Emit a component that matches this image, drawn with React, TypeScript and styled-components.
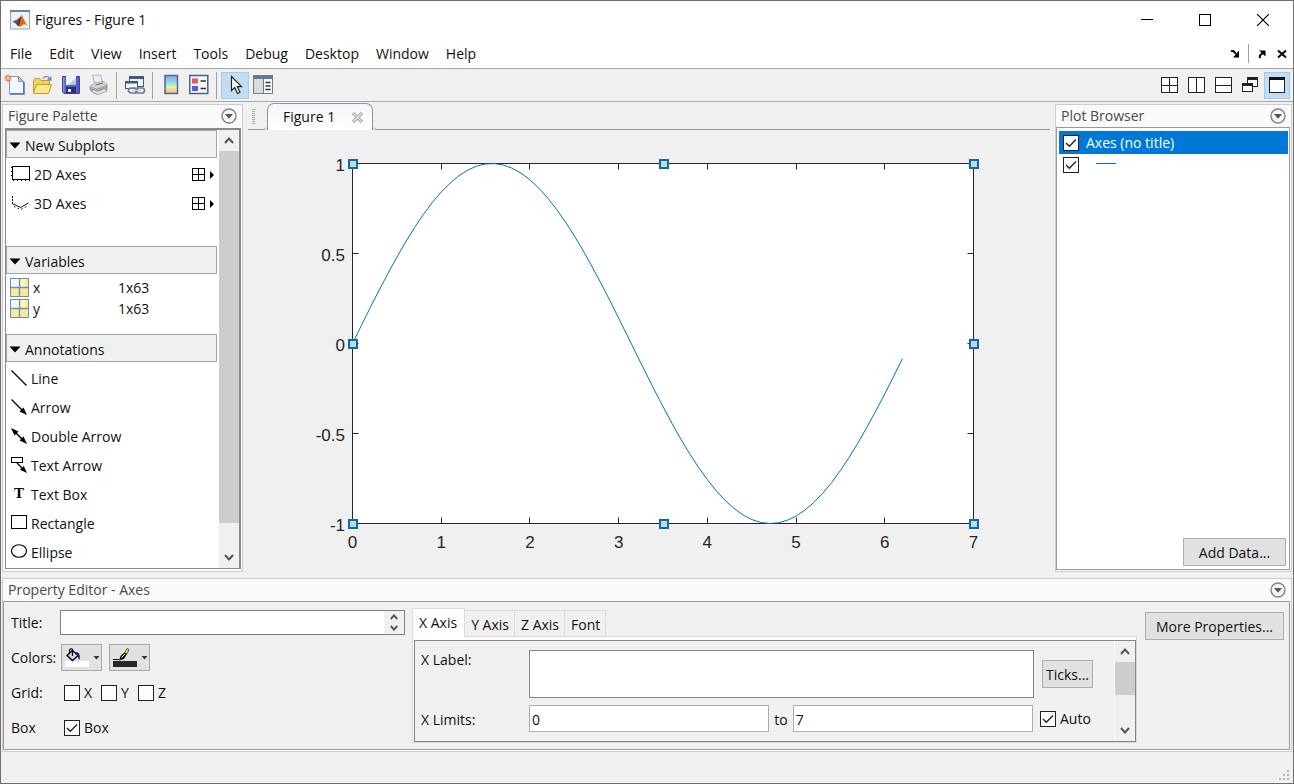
import React from "react";
import styled, { createGlobalStyle, css } from "styled-components";

const GlobalStyle = createGlobalStyle`
  *, *::before, *::after { box-sizing: border-box; }
  body { margin: 0; background: #f0f0f0; }
  body, button, input, textarea {
    font-family: "Open Sans", "Noto Sans", sans-serif;
    font-size: 14px;
    line-height: 20px;
    color: #111;
  }
  button { padding: 0; border: 0; background: none; }
  svg { display: block; flex: none; }
`;

/* ---------- window frame ---------- */

const Window = styled.div`
  min-height: 100vh;
  display: flex;
  flex-direction: column;
  border: 1px solid #6e6e6e;
  background: #f0f0f0;
`;

const TitleBar = styled.header`
  display: flex;
  align-items: center;
  height: 38px;
  padding: 0 1px 0 9px;
  gap: 5px;
  background: #fff;
`;

const WindowTitle = styled.h1`
  flex: 1;
  margin: 0;
  font-size: 14px;
  font-weight: 400;
`;

const CaptionButtons = styled.div`
  display: flex;
  align-self: stretch;
`;

const CaptionButton = styled.button`
  width: 58px;
  display: grid;
  place-items: center;
`;

const MenuBar = styled.nav`
  display: flex;
  align-items: center;
  justify-content: space-between;
  height: 29px;
  padding: 0 6px 0 9px;
  background: #fff;
`;

const MenuList = styled.div`
  display: flex;
  gap: 17px;
`;

const DockControls = styled.div`
  display: flex;
  align-items: center;
  gap: 8px;
`;

const DockPair = styled.div`
  display: flex;
  gap: 10px;
`;

const DockDivider = styled.span`
  width: 1px;
  height: 19px;
  background: #a0a0a0;
`;

const Toolbar = styled.div`
  display: flex;
  justify-content: space-between;
  align-items: center;
  height: 34px;
  padding-right: 3px;
  border-top: 1px solid #a6a6a6;
  border-bottom: 1px solid #a6a6a6;
`;

const ToolGroup = styled.div<{ $gap?: number }>`
  display: flex;
  align-items: center;
  gap: ${(p) => p.$gap ?? 0}px;
`;

const ToolButton = styled.button<{ $active?: boolean; $narrow?: boolean }>`
  width: ${(p) => (p.$narrow ? 26 : 28)}px;
  height: 27px;
  display: grid;
  place-items: center;
  ${(p) =>
    p.$active &&
    css`
      background: #c3dcf2;
      border: 1px solid #9fcbef;
    `}
`;

const ToolDivider = styled.span`
  width: 1px;
  height: 27px;
  margin: 0 4px 0 3px;
  background: #a0a0a0;
`;

const Workspace = styled.main`
  flex: 1;
  display: grid;
  grid-template-columns: 241px minmax(0, 1fr) 237px;
  gap: 5px;
  padding: 1px 1px 6px;
`;

const StatusBar = styled.footer`
  display: flex;
  justify-content: flex-end;
  align-items: flex-end;
  height: 31px;
  padding: 2px;
`;

/* ---------- docked panels ---------- */

const Panel = styled.section<{ $docked?: boolean }>`
  display: flex;
  flex-direction: column;
  margin: ${(p) => (p.$docked ? "1px 0 0" : "0 1px")};
  border: 1px solid #cdcdcd;
  background: #fafafa;
`;

const PanelHeader = styled.div`
  display: flex;
  align-items: center;
  justify-content: space-between;
  height: 22px;
  padding: 0 5px;
`;

const PanelTitle = styled.h2`
  margin: 0;
  font-size: 14px;
  font-weight: 400;
  color: #4a4a4a;
`;

const PanelBody = styled.div<{ $gray?: boolean }>`
  flex: 1;
  display: flex;
  margin: 0 1px 1px 0;
  border: 1px solid #9a9a9a;
  background: ${(p) => (p.$gray ? "#f0f0f0" : "#fff")};
`;

/* ---------- figure palette ---------- */

const PaletteBody = styled(PanelBody)`
  margin: 1px 1px 2px 2px;
  border-width: 2px 2px 1px 1px;
  border-color: #8a8a8a;
`;

const PaletteList = styled.div`
  flex: 1;
  padding-right: 1px;
`;

const SectionHeader = styled.button`
  display: flex;
  align-items: center;
  gap: 4px;
  width: 100%;
  height: 28px;
  padding: 3px 0 0 2px;
  border: 1px solid #a5a5a5;
  background: #f0f0f0;
`;

const SectionItems = styled.div<{ $top: number; $bottom?: number }>`
  padding: ${(p) => p.$top}px 3px ${(p) => p.$bottom ?? 0}px 5px;
`;

const PaletteRow = styled.div`
  display: flex;
  align-items: center;
  justify-content: space-between;
  height: 29px;
`;

const PaletteItem = styled.button`
  display: flex;
  align-items: center;
  gap: 4px;
  > svg { margin-bottom: 2px; }
`;

const GridPicker = styled.button`
  display: flex;
  align-items: center;
  gap: 5px;
`;

const VariableTable = styled.table`
  border-collapse: collapse;
  margin: 3px 0 15px 4px;
  td { height: 21px; padding: 1px 0 0; }
  td:first-child { width: 23px; padding: 0; }
  td:nth-child(2) { width: 85px; }
`;

const ScrollBar = styled.div<{ $line: string }>`
  width: 21px;
  display: flex;
  flex-direction: column;
  border-left: 1px solid ${(p) => p.$line};
  background: #f0f0f0;
`;

const ScrollArrow = styled.button`
  height: 21px;
  display: grid;
  place-items: center;
`;

const ScrollTrack = styled.div`
  flex: 1;
`;

const ScrollThumb = styled.div<{ $length: string }>`
  height: ${(p) => p.$length};
  background: #cdcdcd;
`;

/* ---------- figure document ---------- */

const DocumentArea = styled.div`
  display: flex;
  flex-direction: column;
  min-width: 0;
`;

const TabStrip = styled.div`
  display: flex;
  height: 27px;
`;

const TabGrip = styled.div`
  width: 19px;
  padding: 6px 0 0 3px;
  border-bottom: 1px solid #959595;
  border-bottom-right-radius: 4px;
`;

const FigureTab = styled.div`
  display: flex;
  align-items: center;
  gap: 16px;
  padding: 0 8px 0 15px;
  border: 1px solid #959595;
  border-bottom: 0;
  border-radius: 7px 7px 0 0;
  background: linear-gradient(#f4f4fa, #ffffff);
`;

const TabStripFill = styled.div`
  flex: 1;
  border-bottom: 1px solid #959595;
  border-bottom-left-radius: 4px;
`;

const ChartCanvas = styled.svg`
  width: 100%;
  height: auto;
`;

/* ---------- plot browser ---------- */

const BrowserBody = styled(PanelBody)`
  flex-direction: column;
  justify-content: space-between;
`;

const SeriesList = styled.div`
  padding: 3px 1px 0 2px;
`;

const SeriesRow = styled.label<{ $selected?: boolean }>`
  display: flex;
  align-items: center;
  height: ${(p) => (p.$selected ? 23 : 21)}px;
  padding-left: 4px;
  gap: ${(p) => (p.$selected ? 7 : 17)}px;
  color: #fff;
  background: ${(p) => (p.$selected ? "#0078d7" : "none")};
`;

const BrowserFooter = styled.div`
  display: flex;
  justify-content: flex-end;
  padding: 3px;
`;

const PushButton = styled.button<{ $width: number }>`
  width: ${(p) => p.$width}px;
  height: 28px;
  padding-top: 2px;
  border: 1px solid #adadad;
  background: #e1e1e1;
  white-space: nowrap;
`;

/* ---------- property editor ---------- */

const EditorBody = styled(PanelBody)`
  align-items: flex-start;
  padding: 3px 5px 4px 7px;
`;

const AxesForm = styled.div`
  width: 394px;
`;

const FormRow = styled.div`
  display: grid;
  grid-template-columns: 49px minmax(0, 1fr);
  align-items: center;
  height: 35px;
`;

const CheckGroup = styled.div`
  display: flex;
  gap: 9px;
  padding-left: 4px;
`;

const TitleField = styled.div`
  display: flex;
  height: 25px;
  border: 1px solid #7f7f85;
  background: #fff;
`;

const PlainInput = styled.input`
  flex: 1;
  min-width: 0;
  border: 0;
  padding: 0 2px;
  background: transparent;
`;

const Spinner = styled.div`
  width: 20px;
  display: flex;
  flex-direction: column;
  background: #f0f0f0;
`;

const SpinButton = styled.button`
  flex: 1;
  display: grid;
  place-items: center;
`;

const ColorButtons = styled.div`
  display: flex;
  gap: 7px;
  padding-left: 1px;
`;

const ColorButton = styled.button`
  display: flex;
  align-items: center;
  gap: 3px;
  width: 41px;
  height: 27px;
  padding-left: 3px;
  border: 1px solid #a8a8a8;
  background: #e1e1e1;
`;

const TabbedPane = styled.div`
  flex: 1;
  min-width: 0;
  margin: 3px 8px 0 7px;
`;

const AxisTabs = styled.div`
  display: flex;
  align-items: flex-end;
  height: 28px;
`;

const AxisTab = styled.button<{ $selected?: boolean }>`
  height: ${(p) => (p.$selected ? 29 : 26)}px;
  padding: 3px 5px 0 6px;
  white-space: nowrap;
  border: 1px solid #dcdcdc;
  border-width: 1px 1px 0 0;
  ${(p) =>
    p.$selected &&
    css`
      position: relative;
      margin-bottom: -1px;
      padding: 0 7px 0 6px;
      border-left-width: 1px;
      background: #fff;
    `}
`;

const AxisPage = styled.div`
  border: 1px solid #d9d9d9;
  padding: 3px 0 0 1px;
  background: #fff;
`;

const AxisPageBody = styled.div`
  display: flex;
  height: 102px;
  border: 1px solid #828790;
  background: #f0f0f0;
`;

const AxisFields = styled.div`
  flex: 1;
  min-width: 0;
  display: grid;
  grid-template-columns: 108px minmax(0, 1fr) 80px;
  grid-template-rows: 48px 27px;
  row-gap: 7px;
  padding: 9px 0 0 6px;
`;

const FieldLabel = styled.label<{ $middle?: boolean }>`
  align-self: ${(p) => (p.$middle ? "center" : "start")};
  padding-top: ${(p) => (p.$middle ? 2 : 0)}px;
`;

const LabelText = styled.textarea`
  width: 100%;
  resize: none;
  border: 1px solid #828790;
  background: #fff;
`;

const LimitRange = styled.div`
  display: flex;
  gap: 5px;
  padding-right: 1px;
`;

const LimitInput = styled.input`
  flex: 1;
  min-width: 0;
  padding: 2px 2px 0;
  border: 1px solid #adadad;
  background: #fff;
`;

const SideCell = styled.div`
  display: flex;
  align-items: center;
  padding-left: 8px;
`;

const SideCheck = styled(SideCell)`
  padding-left: 6px;
`;

const EditorActions = styled.div`
  padding-top: 7px;
`;

/* ---------- check box ---------- */

const CheckLabel = styled.label`
  display: flex;
  align-items: center;
  gap: 4px;
`;

const CheckFrame = styled.span`
  display: grid;
  flex: none;
  > * { grid-area: 1 / 1; }
  > svg { pointer-events: none; visibility: hidden; }
  > input:checked + svg { visibility: visible; }
`;

const CheckInput = styled.input`
  appearance: none;
  width: 16px;
  height: 16px;
  margin: 0;
  border: 1px solid #222;
  background: #fff;
`;

const Check = ({ on = false, label }: { on?: boolean; label?: string }) => (
  <CheckFrame>
    <CheckInput type="checkbox" defaultChecked={on} aria-label={label} />
    <svg width="16" height="16" viewBox="0 0 16 16" fill="none" stroke="#222" strokeWidth="1.4">
      <path d="M3 8 6.3 11.2 13 4.6" />
    </svg>
  </CheckFrame>
);

/* ---------- icons ---------- */

const MatlabIcon = () => (
  <svg width="20" height="20" viewBox="0 0 20 20">
    <rect x="0.5" y="0.5" width="19" height="18.5" fill="#eef1f4" stroke="#9aa4ae" />
    <rect x="0" y="0" width="20" height="2" fill="#5f86ad" />
    <path d="M2.5 11.5 7 9.5 10 7 8 13.5 6 14Z" fill="#3b6aa0" />
    <path d="M6 14 8.5 10 11.5 5 11 15.5 8.5 16.5Z" fill="#7c2a17" />
    <path d="M11.5 5C13.5 8 15 12.500 17.500 15.500 15 14 13.500 13 11 16.500L8.500 16C11 13 10.500 8 11.500 5Z" fill="#e06a1b" />
  </svg>
);

const NewIcon = () => (
  <svg width="22" height="22" viewBox="0 0 22 22">
    <path d="M5.500 2.500H14.500L19.500 7.500V19.500H5.500Z" fill="#f3f8fd" stroke="#7d9cc4" />
    <path d="M20 8V20H6" fill="none" stroke="#4f6f9b" strokeWidth="1.500" />
    <path d="M14.500 2.500V7.500H19.500Z" fill="#b9cde6" stroke="#5d7da5" strokeWidth="0.8" />
    <path d="M4 0.500V8M0.500 4.200H7.500M1.500 1.700 6.500 6.700M6.500 1.700 1.500 6.700" stroke="#e8804a" strokeWidth="1.500" />
    <circle cx="4" cy="4.200" r="1.300" fill="#fff0cc" />
  </svg>
);

const OpenIcon = () => (
  <svg width="22" height="22" viewBox="0 0 22 22">
    <path d="M1.500 18.500V6.500L3 4.500H7.500L9 6.500H17.500V10" fill="#f2cf62" stroke="#c79a2e" />
    <path d="M1.500 19.500 4.500 10.500H19.500L16.500 19.500Z" fill="#fbe68d" stroke="#c79a2e" />
    <path d="M11 4.500C13 1.800 15.500 1.800 17 4" fill="none" stroke="#6b90b3" strokeWidth="1.400" />
    <path d="M19.500 2V7L14.800 5.500Z" fill="#6b90b3" />
  </svg>
);

const SaveIcon = () => (
  <svg width="22" height="22" viewBox="0 0 22 22">
    <path d="M2.500 2.500H19.500V19.500H4L2.500 18Z" fill="#545dcb" stroke="#3a429e" />
    <rect x="6" y="2" width="10" height="9" fill="#eef3fb" />
    <path d="M16 4 8 11H16Z" fill="#b4c8ea" />
    <rect x="6" y="13" width="10" height="6" fill="#2a3070" />
    <rect x="8" y="15" width="3" height="3" fill="#e8ecf6" />
    <rect x="3" y="3" width="1.500" height="15" fill="#8d95e2" />
  </svg>
);

const PrintIcon = () => (
  <svg width="22" height="22" viewBox="0 0 22 22">
    <path d="M4.500 1.500 12.500 1 15 9 7 11Z" fill="#e6f0fa" stroke="#9cabbb" strokeWidth="0.800" />
    <path d="M2 12.500 6.500 9 16 7.500 19 10.500V15.500L8.500 20 2.500 16.500Z" fill="#a9a9a9" stroke="#808080" strokeWidth="0.800" />
    <path d="M2 12.500 6.500 9 16 7.500 19 10.500 9 14.500Z" fill="#d2d2d2" />
    <path d="M5 15.500 9.500 17.500 16.500 14.800 19 17 10.500 20.500 4 18Z" fill="#e8e8e8" stroke="#888" strokeWidth="0.700" />
    <path d="M7.500 11 15 9" stroke="#666" />
    <circle cx="12.500" cy="15" r="0.900" fill="#67a851" />
  </svg>
);

const LinkIcon = () => (
  <svg width="22" height="22" viewBox="0 0 22 22">
    <rect x="5.500" y="2.500" width="14" height="10" fill="#f2f5fa" stroke="#3f5686" />
    <rect x="5" y="2" width="15" height="3" fill="#3f5686" />
    <rect x="1.500" y="7.500" width="12" height="7" fill="#f2f5fa" stroke="#3f5686" />
    <rect x="1" y="7" width="13" height="2.500" fill="#3f5686" />
    <g fill="none" stroke="#687e98" strokeWidth="1.700">
      <rect x="4.500" y="14" width="8.500" height="5" rx="2.500" />
      <rect x="12" y="14" width="8.500" height="5" rx="2.500" />
    </g>
    <path d="M8.500 16.500H16.500" stroke="#b9c9d9" strokeWidth="1.200" />
  </svg>
);

const ColorbarIcon = () => (
  <svg width="22" height="22" viewBox="0 0 22 22">
    <defs>
      <linearGradient id="cb" x1="0" y1="0" x2="0" y2="1">
        <stop offset="0" stopColor="#8da5ea" />
        <stop offset="0.350" stopColor="#86dbe9" />
        <stop offset="0.650" stopColor="#eaf2a0" />
        <stop offset="1" stopColor="#f6b184" />
      </linearGradient>
    </defs>
    <rect x="5" y="1.500" width="12.500" height="18" fill="url(#cb)" stroke="#4f6694" strokeWidth="1.500" />
  </svg>
);

const LegendIcon = () => (
  <svg width="22" height="22" viewBox="0 0 22 22">
    <rect x="1.800" y="1.500" width="18" height="18" fill="#f6f8fc" stroke="#4f5f8c" strokeWidth="1.500" />
    <rect x="4" y="4.500" width="6" height="5" fill="#de5a5a" />
    <rect x="4" y="12" width="6" height="5" fill="#5a5ae0" />
    <path d="M12.500 7H18M12.500 14.500H18" stroke="#333" strokeWidth="1.500" />
  </svg>
);

const PointerIcon = () => (
  <svg width="22" height="22" viewBox="0 0 22 22">
    <path d="M7.500 2.500V16.500L10.700 13.500 13.500 19.500 16 18.300 13.300 12.700H17.500Z" fill="#fff" stroke="#222" strokeWidth="1.200" />
  </svg>
);

const InspectorIcon = () => (
  <svg width="22" height="22" viewBox="0 0 22 22">
    <rect x="1.500" y="1.500" width="19" height="18" fill="#fafafa" stroke="#7a7a7a" />
    <rect x="2" y="2" width="18" height="3" fill="#5f7b99" />
    <rect x="2" y="5" width="9" height="14" fill="#d9dcde" />
    <path d="M11.500 5V19" stroke="#777" />
    <path d="M13.500 8.500H18.500M13.500 12H18.500M13.500 15.500H18.500" stroke="#333" strokeWidth="1.400" />
  </svg>
);

const TileIcon = ({ d }: { d: string }) => (
  <svg width="17" height="17" viewBox="0 0 17 17" shapeRendering="crispEdges">
    <rect x="0.500" y="0.500" width="16" height="15" fill="#fff" stroke="#222" />
    <path d={d} stroke="#222" fill="none" />
  </svg>
);

const FloatIcon = () => (
  <svg width="17" height="17" viewBox="0 0 17 17" shapeRendering="crispEdges" fill="#fff" stroke="#222">
    <rect x="5.500" y="0.500" width="10" height="9" />
    <path d="M5 1.500H16" strokeWidth="2" />
    <rect x="0.500" y="6.500" width="10" height="8" />
    <path d="M0 7.500H11" strokeWidth="2" />
  </svg>
);

const MaximizedIcon = () => (
  <svg width="17" height="17" viewBox="0 0 17 17" shapeRendering="crispEdges">
    <rect x="0.500" y="0.500" width="15" height="15" fill="#fff" stroke="#222" />
    <path d="M0 1.500H16" stroke="#111" strokeWidth="3" />
  </svg>
);

const DockIcon = () => (
  <svg width="10" height="10" viewBox="0 0 10 10">
    <path d="M1 2.500C3 1 4.500 3 6 5" fill="none" stroke="#000" strokeWidth="2" />
    <path d="M9 1.500V8.500H3Z" fill="#000" />
  </svg>
);

const UndockIcon = () => (
  <svg width="10" height="10" viewBox="0 0 10 10">
    <path d="M3.500 9C1.500 7 3.500 5.500 6 4" fill="none" stroke="#000" strokeWidth="2" />
    <path d="M2 1.500H8.500V7.500Z" fill="#000" />
  </svg>
);

const CloseSmallIcon = () => (
  <svg width="10" height="10" viewBox="0 0 10 10">
    <path d="M1 1.500 9 8.500M9 1.500 1 8.500" stroke="#000" strokeWidth="2" />
  </svg>
);

const CloseTabIcon = () => (
  <svg width="13" height="13" viewBox="0 0 13 13" fill="none">
    <path d="M2 2 11 11M11 2 2 11" stroke="#b2b2b2" strokeWidth="3.500" />
    <path d="M2.500 2.500 10.500 10.500M10.500 2.500 2.500 10.500" stroke="#dedede" strokeWidth="1.200" />
  </svg>
);

const GripIcon = () => (
  <svg width="5" height="16" viewBox="0 0 5 16" shapeRendering="crispEdges">
    <path d="M1 0.500H4M1 2.500H4M1 4.500H4M1 6.500H4M1 8.500H4M1 10.500H4M1 12.500H4M1 14.500H4" stroke="#aaa" />
  </svg>
);

const MenuDiscIcon = () => (
  <svg width="16" height="16" viewBox="0 0 16 16">
    <circle cx="8" cy="8" r="7" fill="#f5f5f5" stroke="#858585" strokeWidth="1.400" />
    <path d="M4 6H12L8 10.800Z" fill="#555" />
  </svg>
);

const DisclosureIcon = () => (
  <svg width="12" height="7" viewBox="0 0 12 7">
    <path d="M0.500 0.500H11.500L6 6.500Z" fill="#000" />
  </svg>
);

const Axes2DIcon = () => (
  <svg width="19" height="16" viewBox="0 0 19 16" shapeRendering="crispEdges" fill="none" stroke="#000">
    <path d="M1.500 13.500V0.500H18.500V13.500Z" />
    <path d="M0 1.500H1M0 5.500H1M0 9.500H1M2.500 14V15M6.500 14V15M10.500 14V15M14.500 14V15M18.500 14V15" />
  </svg>
);

const Axes3DIcon = () => (
  <svg width="19" height="14" viewBox="0 0 19 14" fill="none" stroke="#111">
    <path d="M1.500 0V8" strokeDasharray="2 1" />
    <path d="M1 7.500 9.500 11.500 17.500 7" />
    <path d="M3 10.500 9.500 13.500 17 10" strokeDasharray="1.500 2.500" />
  </svg>
);

const GridIcon = () => (
  <svg width="13" height="13" viewBox="0 0 13 13" shapeRendering="crispEdges" fill="none" stroke="#000">
    <path d="M0.500 0.500H12.500V12.500H0.500ZM6.500 0V13M0 6.500H13" />
  </svg>
);

const FlyoutIcon = () => (
  <svg width="4" height="8" viewBox="0 0 4 8">
    <path d="M0 0V8L4 4Z" fill="#000" />
  </svg>
);

const MatrixIcon = () => (
  <svg width="20" height="20" viewBox="0 0 20 20">
    <rect x="0.500" y="0.500" width="18" height="18" fill="#f7eb98" stroke="#6e8fae" />
    <rect x="1" y="1" width="8" height="8" fill="#f4f9fc" />
    <rect x="11" y="1" width="4" height="8" fill="#fbf6c8" />
    <path d="M9.500 0V19M0 9.500H19" stroke="#6e8fae" strokeWidth="1.300" />
  </svg>
);

const LineIcon = () => (
  <svg width="16" height="16" viewBox="0 0 16 16">
    <path d="M0.500 0.500 15.500 15.500" stroke="#000" strokeWidth="1.200" />
  </svg>
);

const ArrowIcon = () => (
  <svg width="16" height="16" viewBox="0 0 16 16">
    <path d="M0.500 0.500 12 12" stroke="#000" strokeWidth="1.200" />
    <path d="M16 16 8.500 12.500 12.500 8.500Z" />
  </svg>
);

const DoubleArrowIcon = () => (
  <svg width="16" height="16" viewBox="0 0 16 16">
    <path d="M3 3 13 13" stroke="#000" strokeWidth="1.400" />
    <path d="M16 16 8.500 12.500 12.500 8.500ZM0 0 7.500 3.500 3.500 7.500Z" />
  </svg>
);

const TextArrowIcon = () => (
  <svg width="16" height="16" viewBox="0 0 16 16">
    <rect x="0.500" y="0.500" width="11" height="5" fill="none" stroke="#000" />
    <path d="M6 6 13 13" stroke="#000" strokeWidth="1.300" />
    <path d="M16 16 9 12.800 12.800 9Z" />
  </svg>
);

const TextBoxIcon = () => (
  <svg width="16" height="16" viewBox="0 0 16 16">
    <text x="8" y="12" textAnchor="middle" fontFamily="Liberation Serif, serif" fontSize="15" fontWeight="700">
      T
    </text>
  </svg>
);

const RectangleIcon = () => (
  <svg width="16" height="16" viewBox="0 0 16 16">
    <rect x="0.500" y="0.500" width="15" height="13" fill="none" stroke="#000" />
  </svg>
);

const EllipseIcon = () => (
  <svg width="16" height="16" viewBox="0 0 16 16">
    <ellipse cx="8" cy="7" rx="7.500" ry="6.300" fill="none" stroke="#000" strokeWidth="1.100" />
  </svg>
);

const Chevron = ({ down = false, small = false }: { down?: boolean; small?: boolean }) => (
  <svg width={small ? 8 : 10} height={small ? 6 : 7} viewBox="0 0 10 7">
    <path d={down ? "M1 1 5 5.500 9 1" : "M1 6 5 1.500 9 6"} fill="none" stroke="#555" strokeWidth={small ? 2.400 : 2} />
  </svg>
);

const BucketIcon = () => (
  <svg width="25" height="20" viewBox="0 0 25 20">
    <rect x="0" y="13" width="24" height="6" fill="#fff" />
    <path d="M7.500 2.500 13 7.500 7.500 12.500 2 7.500Z" fill="#d8d8d8" stroke="#000" strokeWidth="1.300" />
    <path d="M7.500 8V1.500C7.500 0.500 4.500 0.500 4.500 2.500V4.500" fill="none" stroke="#000" strokeWidth="1.200" />
    <path d="M10.500 4C14.500 4 15.500 7 14.500 12 13.500 11 12.500 9 12.500 7.500Z" fill="#101c8c" />
  </svg>
);

const BrushIcon = () => (
  <svg width="25" height="20" viewBox="0 0 25 20">
    <rect x="0" y="13" width="24" height="6" fill="#262626" />
    <path d="M0 11.500H6" stroke="#000" />
    <path d="M6 12.500 7.500 8 12 4 14 6 11 11Z" fill="#111" />
    <path d="M11.500 5 14 0.500 16 1.500 14 6Z" fill="#e5e43c" stroke="#222" strokeWidth="0.700" />
    <path d="M8.500 9.500 12 6" stroke="#eee" />
  </svg>
);

const DropIcon = () => (
  <svg width="7" height="4" viewBox="0 0 7 4">
    <path d="M0.500 0H6.500L3.500 3.500Z" fill="#333" />
  </svg>
);

const SizeGripIcon = () => (
  <svg width="12" height="12" viewBox="0 0 12 12" fill="#b5b5b5">
    <path d="M8 1h2v2H8ZM8 5h2v2H8ZM4 5h2v2H4ZM8 9h2v2H8ZM4 9h2v2H4ZM0 9h2v2H0Z" />
  </svg>
);

/* ---------- chart ---------- */

const plot = { left: 104.5, right: 725.5, top: 33.5, bottom: 393.5 };
const xAt = (v: number) => plot.left + (v / 7) * (plot.right - plot.left);
const yAt = (v: number) => (plot.top + plot.bottom) / 2 - (v * (plot.bottom - plot.top)) / 2;
const samples = Array.from({ length: 63 }, (_, i) => i / 10);

const Chart = () => (
  <ChartCanvas viewBox="0 0 802 442" role="img" aria-label="Line plot of y against x">
    <rect
      x={plot.left}
      y={plot.top}
      width={plot.right - plot.left}
      height={plot.bottom - plot.top}
      fill="#fff"
      stroke="#262626"
    />
    <g fontFamily="Liberation Sans, Arial, sans-serif" fontSize="17" fill="#262626">
      {[0, 1, 2, 3, 4, 5, 6, 7].map((v) => (
        <g key={v}>
          <path
            d={`M${Math.floor(xAt(v)) + 0.5} ${plot.bottom}v-6M${Math.floor(xAt(v)) + 0.5} ${plot.top}v6`}
            stroke="#262626"
          />
          <text x={xAt(v)} y="418" textAnchor="middle">
            {v}
          </text>
        </g>
      ))}
      {[1, 0.5, 0, -0.5, -1].map((v) => (
        <g key={v}>
          <path d={`M${plot.left} ${yAt(v)}h6M${plot.right} ${yAt(v)}h-6`} stroke="#262626" />
          <text x="97" y={yAt(v) + 7} textAnchor="end">
            {v}
          </text>
        </g>
      ))}
    </g>
    <polyline
      points={samples.map((x) => `${xAt(x).toFixed(1)},${yAt(Math.sin(x)).toFixed(1)}`).join(" ")}
      fill="none"
      stroke="#0072bd"
    />
    {[0, 3.5, 7].flatMap((x) =>
      [1, 0, -1]
        .filter((y) => !(x === 3.5 && y === 0))
        .map((y) => (
          <rect
            key={`${x}:${y}`}
            x={Math.floor(xAt(x)) - 3}
            y={Math.floor(yAt(y)) - 3}
            width="8"
            height="8"
            fill="#b5def2"
            stroke="#1a659e"
            strokeWidth="2"
          />
        ))
    )}
  </ChartCanvas>
);

/* ---------- screen ---------- */

const menus = ["File", "Edit", "View", "Insert", "Tools", "Debug", "Desktop", "Window", "Help"];

const annotations: [string, React.FC][] = [
  ["Line", LineIcon],
  ["Arrow", ArrowIcon],
  ["Double Arrow", DoubleArrowIcon],
  ["Text Arrow", TextArrowIcon],
  ["Text Box", TextBoxIcon],
  ["Rectangle", RectangleIcon],
  ["Ellipse", EllipseIcon],
];

const Header = ({ title }: { title: string }) => (
  <PanelHeader>
    <PanelTitle>{title}</PanelTitle>
    <button aria-label={`${title} menu`}>
      <MenuDiscIcon />
    </button>
  </PanelHeader>
);

const Scroller = ({ thumb, line }: { thumb: string; line: string }) => (
  <ScrollBar $line={line}>
    <ScrollArrow aria-label="Scroll up">
      <Chevron />
    </ScrollArrow>
    <ScrollTrack>
      <ScrollThumb $length={thumb} />
    </ScrollTrack>
    <ScrollArrow aria-label="Scroll down">
      <Chevron down />
    </ScrollArrow>
  </ScrollBar>
);

const Subplot = ({ name, icon }: { name: string; icon: React.ReactNode }) => (
  <PaletteRow>
    <PaletteItem>
      {icon}
      {name}
    </PaletteItem>
    <GridPicker aria-label={`${name} layout`}>
      <GridIcon />
      <FlyoutIcon />
    </GridPicker>
  </PaletteRow>
);

const Section = ({ title }: { title: string }) => (
  <SectionHeader aria-expanded="true">
    <DisclosureIcon />
    {title}
  </SectionHeader>
);

export default function App() {
  return (
    <>
      <GlobalStyle />
      <Window>
        <TitleBar>
          <MatlabIcon />
          <WindowTitle>Figures - Figure 1</WindowTitle>
          <CaptionButtons>
            <CaptionButton aria-label="Minimize">
              <svg width="12" height="12" shapeRendering="crispEdges">
                <path d="M0 5.500H12" stroke="#000" />
              </svg>
            </CaptionButton>
            <CaptionButton aria-label="Maximize">
              <svg width="12" height="12" shapeRendering="crispEdges">
                <rect x="0.500" y="0.500" width="11" height="11" fill="none" stroke="#000" />
              </svg>
            </CaptionButton>
            <CaptionButton aria-label="Close">
              <svg width="12" height="12">
                <path d="M0 0 12 12M12 0 0 12" stroke="#000" strokeWidth="1.200" />
              </svg>
            </CaptionButton>
          </CaptionButtons>
        </TitleBar>

        <MenuBar>
          <MenuList>
            {menus.map((m) => (
              <button key={m}>{m}</button>
            ))}
          </MenuList>
          <DockControls>
            <button aria-label="Dock">
              <DockIcon />
            </button>
            <DockDivider />
            <DockPair>
              <button aria-label="Undock">
                <UndockIcon />
              </button>
              <button aria-label="Close figure">
                <CloseSmallIcon />
              </button>
            </DockPair>
          </DockControls>
        </MenuBar>

        <Toolbar>
          <ToolGroup>
            <ToolButton aria-label="New figure"><NewIcon /></ToolButton>
            <ToolButton aria-label="Open"><OpenIcon /></ToolButton>
            <ToolButton aria-label="Save"><SaveIcon /></ToolButton>
            <ToolButton aria-label="Print"><PrintIcon /></ToolButton>
            <ToolDivider />
            <ToolButton aria-label="Link plot"><LinkIcon /></ToolButton>
            <ToolDivider />
            <ToolButton aria-label="Insert colorbar"><ColorbarIcon /></ToolButton>
            <ToolButton aria-label="Insert legend"><LegendIcon /></ToolButton>
            <ToolDivider />
            <ToolButton aria-label="Edit plot" $active><PointerIcon /></ToolButton>
            <ToolButton aria-label="Property inspector"><InspectorIcon /></ToolButton>
          </ToolGroup>
          <ToolGroup $gap={1}>
            <ToolButton $narrow aria-label="Tile"><TileIcon d="M8.500 0V16M0 8.500H17" /></ToolButton>
            <ToolButton $narrow aria-label="Left and right"><TileIcon d="M8.500 0V16" /></ToolButton>
            <ToolButton $narrow aria-label="Top and bottom"><TileIcon d="M0 8.500H17" /></ToolButton>
            <ToolButton $narrow aria-label="Float"><FloatIcon /></ToolButton>
            <ToolButton $narrow $active aria-label="Maximize figure"><MaximizedIcon /></ToolButton>
          </ToolGroup>
        </Toolbar>

        <Workspace>
          <Panel $docked>
            <Header title="Figure Palette" />
            <PaletteBody>
              <PaletteList>
                <Section title="New Subplots" />
                <SectionItems $top={2} $bottom={28}>
                  <Subplot name="2D Axes" icon={<Axes2DIcon />} />
                  <Subplot name="3D Axes" icon={<Axes3DIcon />} />
                </SectionItems>
                <Section title="Variables" />
                <VariableTable>
                  <tbody>
                    {["x", "y"].map((name) => (
                      <tr key={name}>
                        <td><MatrixIcon /></td>
                        <td>{name}</td>
                        <td>1x63</td>
                      </tr>
                    ))}
                  </tbody>
                </VariableTable>
                <Section title="Annotations" />
                <SectionItems $top={2}>
                  {annotations.map(([name, Icon]) => (
                    <PaletteRow key={name}>
                      <PaletteItem>
                        <Icon />
                        {name}
                      </PaletteItem>
                    </PaletteRow>
                  ))}
                </SectionItems>
              </PaletteList>
              <Scroller thumb="94%" line="#fff" />
            </PaletteBody>
          </Panel>

          <DocumentArea>
            <TabStrip>
              <TabGrip><GripIcon /></TabGrip>
              <FigureTab>
                Figure 1
                <button aria-label="Close Figure 1"><CloseTabIcon /></button>
              </FigureTab>
              <TabStripFill />
            </TabStrip>
            <Chart />
          </DocumentArea>

          <Panel $docked>
            <Header title="Plot Browser" />
            <BrowserBody>
              <SeriesList>
                <SeriesRow $selected>
                  <Check on />
                  Axes (no title)
                </SeriesRow>
                <SeriesRow>
                  <Check on label="Line series" />
                  <svg width="20" height="3">
                    <path d="M0 0.500H20" stroke="#0072bd" />
                  </svg>
                </SeriesRow>
              </SeriesList>
              <BrowserFooter>
                <PushButton $width={103}>Add Data...</PushButton>
              </BrowserFooter>
            </BrowserBody>
          </Panel>
        </Workspace>

        <Panel>
          <Header title="Property Editor - Axes" />
          <EditorBody $gray>
            <AxesForm>
              <FormRow>
                <label htmlFor="title">Title:</label>
                <TitleField>
                  <PlainInput id="title" />
                  <Spinner>
                    <SpinButton aria-label="Previous line"><Chevron small /></SpinButton>
                    <SpinButton aria-label="Next line"><Chevron small down /></SpinButton>
                  </Spinner>
                </TitleField>
              </FormRow>
              <FormRow>
                <span>Colors:</span>
                <ColorButtons>
                  <ColorButton aria-label="Background color"><BucketIcon /><DropIcon /></ColorButton>
                  <ColorButton aria-label="Axes color"><BrushIcon /><DropIcon /></ColorButton>
                </ColorButtons>
              </FormRow>
              <FormRow>
                <span>Grid:</span>
                <CheckGroup>
                  {["X", "Y", "Z"].map((axis) => (
                    <CheckLabel key={axis}>
                      <Check />
                      {axis}
                    </CheckLabel>
                  ))}
                </CheckGroup>
              </FormRow>
              <FormRow>
                <span>Box</span>
                <CheckGroup>
                  <CheckLabel>
                    <Check on />
                    Box
                  </CheckLabel>
                </CheckGroup>
              </FormRow>
            </AxesForm>

            <TabbedPane>
              <AxisTabs role="tablist">
                <AxisTab role="tab" $selected aria-selected="true">X Axis</AxisTab>
                <AxisTab role="tab">Y Axis</AxisTab>
                <AxisTab role="tab">Z Axis</AxisTab>
                <AxisTab role="tab">Font</AxisTab>
              </AxisTabs>
              <AxisPage>
                <AxisPageBody>
                  <AxisFields>
                    <FieldLabel htmlFor="xlabel">X Label:</FieldLabel>
                    <LabelText id="xlabel" />
                    <SideCell>
                      <PushButton $width={51}>Ticks...</PushButton>
                    </SideCell>
                    <FieldLabel htmlFor="xmin" $middle>X Limits:</FieldLabel>
                    <LimitRange>
                      <LimitInput id="xmin" defaultValue="0" />
                      <FieldLabel htmlFor="xmax" $middle>to</FieldLabel>
                      <LimitInput id="xmax" defaultValue="7" />
                    </LimitRange>
                    <SideCheck>
                      <CheckLabel>
                        <Check on />
                        Auto
                      </CheckLabel>
                    </SideCheck>
                  </AxisFields>
                  <Scroller thumb="57%" line="#fff" />
                </AxisPageBody>
              </AxisPage>
            </TabbedPane>

            <EditorActions>
              <PushButton $width={139}>More Properties...</PushButton>
            </EditorActions>
          </EditorBody>
        </Panel>

        <StatusBar>
          <SizeGripIcon />
        </StatusBar>
      </Window>
    </>
  );
}
